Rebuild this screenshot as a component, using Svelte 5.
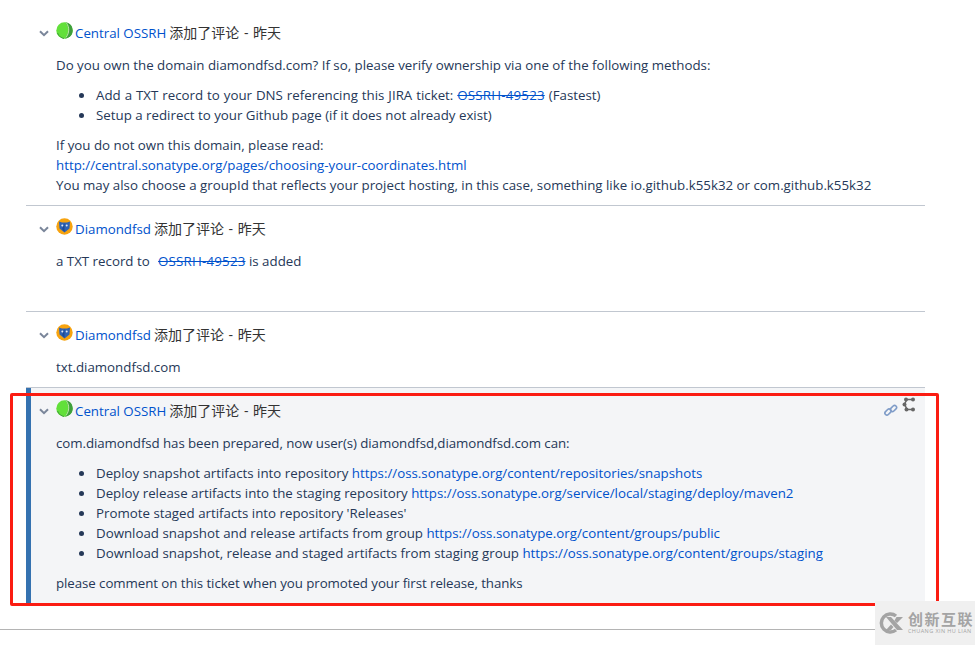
<script>
  const central = 'central';
  const diamond = 'diamond';
</script>

{#snippet avatar(kind)}
  {#if kind === central}
    <svg class="avatar" width="17" height="17" viewBox="0 0 17 17">
      <circle cx="8.500" cy="8.500" r="8.200" fill="#62e03a" />
      <path d="M9.500 0.500 C13 4 13.500 11 9 16.500 C14 16 16.700 12.500 16.700 8.500 C16.700 4 14 1 9.500 0.500 Z" fill="#3f9e3c" />
      <path d="M10.500 1 C13.500 5 13.500 11 10 15.500" fill="none" stroke="#c8f0b0" stroke-width="0.900" />
      <path d="M1.500 11 C3 14.500 5.500 16 8 16.500" fill="none" stroke="#3f9e3c" stroke-width="1" />
    </svg>
  {:else}
    <svg class="avatar" width="17" height="17" viewBox="0 0 17 17">
      <circle cx="8.500" cy="8.500" r="8.200" fill="#f7a30f" />
      <path d="M3 3.500 L6 4.500 L11 4.500 L14 3.500 L13.500 10.500 L8.500 14.500 L3.500 10.500 Z" fill="#2f62b5" />
      <path d="M8.500 5 V14 L6 11 Z" fill="#1f4a94" />
      <circle cx="6.300" cy="7.500" r="1" fill="#dfe8f6" />
      <circle cx="10.700" cy="7.500" r="1" fill="#dfe8f6" />
    </svg>
  {/if}
{/snippet}

{#snippet header(kind, name)}
  <div class="head">
    <svg class="chevron" width="10" height="7" viewBox="0 0 10 7">
      <path d="M1 1.200 L5 5.200 L9 1.200" fill="none" stroke="#7a869a" stroke-width="2" />
    </svg>
    {@render avatar(kind)}
    <a class="user" href="#u">{name}</a>
    <span class="meta">添加了评论 - 昨天</span>
  </div>
{/snippet}

<div class="page">
  <section class="comment first">
    {@render header(central, 'Central OSSRH')}
    <div class="body">
      <p>Do you own the domain diamondfsd.com? If so, please verify ownership via one of the following methods:</p>
      <ul>
        <li class="wide">Add a TXT record to your DNS referencing this JIRA ticket: <a href="#t"><s>OSSRH-49523</s></a> (Fastest)</li>
        <li>Setup a redirect to your Github page (if it does not already exist)</li>
      </ul>
      <p>
        If you do not own this domain, please read:<br />
        <a href="#c">http://central.sonatype.org/pages/choosing-your-coordinates.html</a><br />
        You may also choose a groupId that reflects your project hosting, in this case, something like io.github.k55k32 or com.github.k55k32
      </p>
    </div>
  </section>

  <section class="comment second">
    {@render header(diamond, 'Diamondfsd')}
    <div class="body">
      <p>a TXT record to &nbsp;<a class="ticket" href="#t"><s>OSSRH-49523</s></a> is added</p>
    </div>
  </section>

  <section class="comment third">
    {@render header(diamond, 'Diamondfsd')}
    <div class="body">
      <p>txt.diamondfsd.com</p>
    </div>
  </section>

  <section class="comment focused">
    <div class="actions">
      <svg class="link" width="14" height="13" viewBox="0 0 14 13" fill="none" stroke="#7f9cc8" stroke-width="1.600">
        <rect x="0.500" y="6" width="7" height="4" rx="2" transform="rotate(-45 4 8)" />
        <rect x="6" y="2.500" width="7" height="4" rx="2" transform="rotate(-45 9.500 4.500)" />
      </svg>
      <svg class="tree" width="14" height="15" viewBox="0 0 14 15">
        <path d="M11 2.500 H5 L2.500 7 L5 12.500 H11" fill="none" stroke="#666" stroke-width="1.500" />
        <circle cx="4" cy="2.500" r="2" fill="#666" />
        <circle cx="11" cy="2.500" r="2" fill="#666" />
        <circle cx="2.500" cy="7.500" r="2" fill="#666" />
        <circle cx="4.500" cy="12.500" r="2" fill="#666" />
        <circle cx="11" cy="12.500" r="2" fill="#666" />
      </svg>
    </div>
    {@render header(central, 'Central OSSRH')}
    <div class="body">
      <p class="tight">com.diamondfsd has been prepared, now user(s) diamondfsd,diamondfsd.com can:</p>
      <ul>
        <li>Deploy snapshot artifacts into repository <a href="#r">https://oss.sonatype.org/content/repositories/snapshots</a></li>
        <li>Deploy release artifacts into the staging repository <a href="#r">https://oss.sonatype.org/service/local/staging/deploy/maven2</a></li>
        <li>Promote staged artifacts into repository 'Releases'</li>
        <li>Download snapshot and release artifacts from group <a href="#r">https://oss.sonatype.org/content/groups/public</a></li>
        <li>Download snapshot, release and staged artifacts from staging group <a href="#r">https://oss.sonatype.org/content/groups/staging</a></li>
      </ul>
      <p class="tight">please comment on this ticket when you promoted your first release, thanks</p>
    </div>
  </section>

  <div class="rule"></div>

  <!-- red annotation drawn over the screenshot -->
  <div class="annotation"></div>

  <div class="watermark">
    <svg width="26" height="22" viewBox="0 0 26 22">
      <path d="M18 4 A9 9 0 1 0 18 18" fill="none" stroke="#a4a4a4" stroke-width="3.500" />
      <path d="M8 5 H13 L25 18 H19 Z M8 18 L13 12.500 L15.500 15 L13 18 Z M18.500 5 H25 L19 11 L16.500 8.500 Z" fill="#a4a4a4" />
    </svg>
    <div class="mark-text">
      <span class="mark-cn">创新互联</span>
      <span class="mark-en">CHUANG XIN HU LIAN</span>
    </div>
  </div>
</div>

<style>
  :global(body) {
    margin: 0;
    background: #fff;
    font-family: "Open Sans", "Noto Sans CJK SC", sans-serif;
    font-size: 13.300px;
    line-height: 20px;
    color: #253858;
  }

  .page {
    position: relative;
    width: 975px;
    height: 645px;
    overflow: hidden;
    padding: 0 50px 0 26px;
    box-sizing: border-box;
  }

  a {
    color: #0052cc;
    text-decoration: none;
  }

  s {
    text-decoration-thickness: 1px;
    letter-spacing: 0.200px;
  }

  .ticket {
    margin-left: 1.500px;
  }

  .comment {
    border-bottom: 1px solid #c1c7d0;
    padding: 0 0 0 12px;
  }

  .first {
    padding-top: 23px;
    height: 182px;
  }

  .second {
    padding-top: 13px;
    height: 92px;
  }

  .third {
    padding-top: 13px;
    height: 62px;
  }

  .focused {
    position: relative;
    padding-top: 13px;
    padding-bottom: 5px;
    height: 198px;
    background: #f4f5f7;
    border-left: 5px solid #3572b0;
    border-bottom: 0;
    padding-left: 7px;
  }

  .head {
    display: flex;
    align-items: center;
    height: 20px;
    margin-bottom: 12px;
  }

  .chevron {
    margin: 1px 7px 0 1px;
  }

  .avatar {
    margin-top: -6px;
    margin-right: 2px;
  }

  .user {
    margin-right: 3px;
  }

  .meta {
    color: #333;
    font-size: 14px;
    word-spacing: 1px;
  }

  .body {
    padding-left: 18px;
  }

  p {
    margin: 0;
  }

  .tight {
    letter-spacing: -0.070px;
  }

  ul {
    margin: 10px 0;
    padding-left: 40px;
    list-style: none;
  }

  li {
    position: relative;
  }

  li::before {
    content: '';
    position: absolute;
    left: -17px;
    top: 8px;
    width: 5px;
    height: 5px;
    border-radius: 50%;
    background: #253858;
  }

  .wide {
    word-spacing: 0.500px;
  }

  .actions {
    position: absolute;
    top: 10px;
    right: 9px;
    display: flex;
    align-items: flex-start;
    gap: 4px;
  }

  .link {
    margin-top: 6px;
  }

  .tree {
    margin-top: -1px;
  }

  .rule {
    position: absolute;
    left: 0;
    right: 0;
    top: 629px;
    height: 1px;
    background: #b4b4b4;
  }

  .annotation {
    position: absolute;
    left: 10px;
    top: 393px;
    width: 923px;
    height: 207px;
    border: 3px solid #fb1c12;
    border-radius: 2px;
    pointer-events: none;
  }

  .watermark {
    position: absolute;
    left: 875px;
    top: 601px;
    width: 100px;
    height: 44px;
    background: #f0f0f0;
    display: flex;
    align-items: center;
    gap: 4px;
    padding-left: 3px;
    box-sizing: border-box;
  }

  .mark-text {
    display: flex;
    flex-direction: column;
    color: #a4a4a4;
    white-space: nowrap;
  }

  .mark-cn {
    font-size: 15px;
    line-height: 17px;
    font-weight: 700;
    letter-spacing: 1.500px;
  }

  .mark-en {
    font-size: 5.500px;
    line-height: 7px;
    letter-spacing: 0.400px;
  }
</style>
